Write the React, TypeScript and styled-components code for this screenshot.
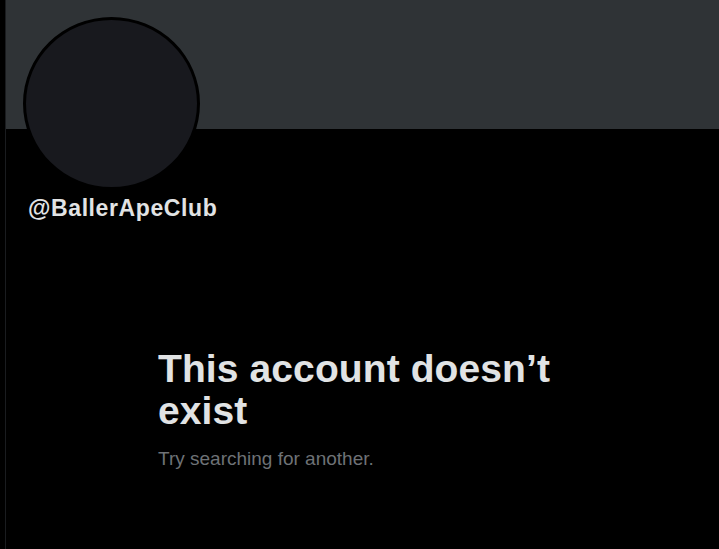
import * as React from 'react'
import styled, { createGlobalStyle } from 'styled-components'

const GlobalStyle = createGlobalStyle`
  html, body {
    margin: 0;
    padding: 0;
    background: #000;
  }
  body {
    font-family: 'Liberation Sans', Arial, sans-serif;
    -webkit-font-smoothing: antialiased;
  }
`

const Page = styled.div`
  width: 719px;
  height: 549px;
  overflow: hidden;
  background: #000;
  display: flex;
`
const Gutter = styled.div`
  width: 6px;
  flex-shrink: 0;
  border-right: 1px solid #1a1c1f;
  box-sizing: border-box;
`
const Column = styled.div`
  flex: 1;
  display: flex;
  flex-direction: column;
`
const Banner = styled.div`
  height: 129px;
  background: #2f3336;
  flex-shrink: 0;
`
const ProfileHeader = styled.div`
  padding-left: 17px;
  display: flex;
  flex-direction: column;
`
const Avatar = styled.div`
  width: 177px;
  height: 173px;
  margin-top: -112px;
  border-radius: 50%;
  background: #18191e;
  border: 3px solid #000;
  box-sizing: border-box;
`
const Handle = styled.div`
  margin-top: 4px;
  margin-left: 5px;
  font-size: 23px;
  line-height: 28px;
  font-weight: 700;
  letter-spacing: 0.6px;
  color: #e1e3e4;
`
const EmptyState = styled.div`
  margin-top: 126px;
  margin-left: 152px;
  width: 430px;
  display: flex;
  flex-direction: column;
`
const Title = styled.div`
  font-size: 39px;
  line-height: 42px;
  font-weight: 700;
  color: #e1e3e4;
  letter-spacing: 0.1px;
`
const Subtitle = styled.div`
  margin-top: 15px;
  font-size: 19px;
  line-height: 24px;
  color: #6e7276;
`

const App = () => (
  <Page>
    <GlobalStyle />
    <Gutter />
    <Column>
      <Banner />
      <ProfileHeader>
        <Avatar />
        <Handle>@BallerApeClub</Handle>
      </ProfileHeader>
      <EmptyState>
        <Title>This account doesn’t exist</Title>
        <Subtitle>Try searching for another.</Subtitle>
      </EmptyState>
    </Column>
  </Page>
)

export default App
